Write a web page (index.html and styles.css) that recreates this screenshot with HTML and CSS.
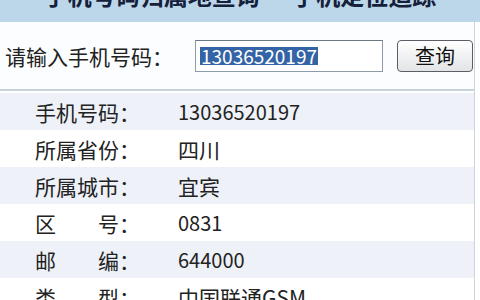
FILE: index.html
```html
<!DOCTYPE html>
<html>
<head>
  <meta charset="UTF-8">
  <title>手机号码归属地查询</title>
  <link rel="stylesheet" href="styles.css">
</head>
<body>
  <div class="banner">
    <h1>手机号码归属地查询 — 手机定位追踪</h1>
  </div>

  <div class="panel">
    <div class="search">
      <label>请输入手机号码：</label>
      <div class="field"><span class="sel">13036520197</span></div>
      <button class="btn">查询</button>
    </div>

    <div class="result">
      <div class="row odd"><span class="key">手机号码：</span><span class="val num">13036520197</span></div>
      <div class="row"><span class="key">所属省份：</span><span class="val">四川</span></div>
      <div class="row odd"><span class="key">所属城市：</span><span class="val">宜宾</span></div>
      <div class="row"><span class="key">区　　号：</span><span class="val num">0831</span></div>
      <div class="row odd"><span class="key">邮　　编：</span><span class="val num">644000</span></div>
      <div class="row"><span class="key">类　　型：</span><span class="val">中国联通GSM</span></div>
    </div>
  </div>
</body>
</html>
```

FILE: styles.css
```css
body {
  margin: 0;
  background: #fff;
  color: #222;
  font-family: "Noto Sans CJK SC", "Liberation Sans", sans-serif;
  overflow: hidden;
}
.banner {
  height: 22px;
  overflow: hidden;
  background: #bcd6ea;
}
.banner h1 {
  margin: -17px 0 0;
  font-size: 24px;
  line-height: 24px;
  font-weight: bold;
  color: #15203a;
  text-align: center;
}
.panel {
  width: 474px;
  border-right: 1px solid #cbd5de;
}
.search {
  height: 67px;
  display: flex;
  align-items: center;
  padding-left: 5px;
  border-bottom: 2px solid #c8d4dc;
  background: #fcfdfe;
}
.search label {
  font-size: 21px;
  width: 190px;
}
.field {
  width: 182px;
  height: 29px;
  border: 1px solid #8d9aa8;
  border-top-color: #6c7784;
  background: #fff;
  padding: 1px 0 0 4px;
  display: flex;
  align-items: center;
}
.sel {
  background: #3463a6;
  color: #fff;
  font-size: 19px;
  line-height: 18px;
  padding: 0 1px;
}
.btn {
  margin-left: 14px;
  width: 76px;
  height: 32px;
  border: 1px solid #5a5f66;
  border-radius: 4px;
  background: linear-gradient(#ffffff, #e2e4e6);
  font-family: inherit;
  font-size: 20px;
  color: #111;
  padding: 0;
}
.result {
  padding-top: 2px;
}
.row {
  height: 37px;
  display: flex;
  align-items: center;
  font-size: 21px;
}
.row.odd {
  background: #eef1f8;
}
.key {
  width: 143px;
  padding-left: 35px;
}
.num {
  font-size: 20px;
}
```
